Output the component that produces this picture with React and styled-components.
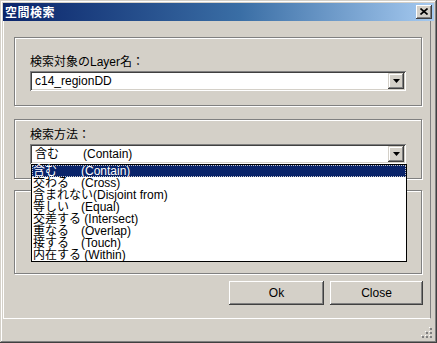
import React from 'react';
import styled, { createGlobalStyle } from 'styled-components';

const Global = createGlobalStyle`
  html, body { margin: 0; padding: 0; background: #d4d0c8; }
  body {
    font-family: "Liberation Sans", "Noto Sans CJK JP", sans-serif;
    font-size: 12px;
    color: #000;
  }
  * { box-sizing: border-box; }
`;

const Window = styled.div`
  width: 437px;
  height: 343px;
  padding: 3px;
  background: #d4d0c8;
  box-shadow: inset -1px -1px #404040, inset 1px 1px #d4d0c8,
    inset -2px -2px #808080, inset 2px 2px #ffffff;
  display: flex;
  flex-direction: column;
`;

const TitleBar = styled.div`
  height: 18px;
  flex: none;
  background: linear-gradient(to right, #0a246a 0%, #3a6ea5 55%, #a6caf0 100%);
  display: flex;
  align-items: center;
  justify-content: space-between;
  padding: 0 2px 0 2px;
`;

const Title = styled.span`
  color: #fff;
  font-family: "Noto Sans CJK JP", sans-serif;
  font-weight: 700;
  font-size: 12px;
  letter-spacing: 0.5px;
  line-height: 16px;
`;

const CloseBtn = styled.div`
  width: 16px;
  height: 14px;
  background: #d4d0c8;
  box-shadow: inset -1px -1px #404040, inset 1px 1px #ffffff,
    inset -2px -2px #808080;
  display: flex;
  align-items: center;
  justify-content: center;
  padding-bottom: 1px;
  padding-right: 1px;
`;

const Panel = styled.div`
  width: 428px;
  height: 298px;
  flex: none;
  border-left: 1px solid #ffffff;
  border-right: 1px solid #808080;
  border-bottom: 1px solid #ffffff;
  padding: 16px 8px 0 10px;
  display: flex;
  flex-direction: column;
`;

const Group = styled.div`
  position: relative;
  width: 408px;
  height: ${(p) => p.$h}px;
  margin-top: ${(p) => p.$mt || 0}px;
  border: 1px solid #808080;
  box-shadow: inset 1px 1px #ffffff, 1px 1px #ffffff;
  padding: ${(p) => p.$pt || 0}px 15px 0 15px;
  flex: none;
`;

const Label = styled.div`
  height: 12px;
  line-height: 12px;
  margin-bottom: 3px;
  white-space: pre;
`;

const ComboWrap = styled.div`
  position: relative;
  width: 376px;
`;

const Combo = styled.div`
  width: 376px;
  height: 20px;
  background: #ffffff;
  box-shadow: inset 1px 1px #808080, inset -1px -1px #ffffff,
    inset 2px 2px #404040, inset -2px -2px #d4d0c8;
  display: flex;
  align-items: center;
  justify-content: space-between;
  padding: 2px 2px 2px 5px;
`;

const ComboText = styled.span`
  white-space: pre;
  line-height: 12px;
`;

const DropBtn = styled.div`
  width: 16px;
  height: 16px;
  background: #d4d0c8;
  box-shadow: inset -1px -1px #404040, inset 1px 1px #d4d0c8,
    inset -2px -2px #808080, inset 2px 2px #ffffff;
  display: flex;
  align-items: center;
  justify-content: center;
`;

const List = styled.div`
  position: absolute;
  top: 100%;
  left: 1px;
  width: 376px;
  background: #ffffff;
  border: 1px solid #000000;
  z-index: 10;
`;

const Item = styled.div`
  height: 12px;
  line-height: 12px;
  padding-left: 1px;
  white-space: pre;
  background: ${(p) => (p.$sel ? '#0a246a' : '#ffffff')};
  color: ${(p) => (p.$sel ? '#ffffff' : '#000000')};
  outline: ${(p) => (p.$sel ? '1px dotted #c8c8c8' : 'none')};
  outline-offset: -1px;
`;

const ButtonRow = styled.div`
  display: flex;
  justify-content: flex-end;
  gap: 6px;
  margin-top: 7px;
  margin-right: -1px;
`;

const Button = styled.div`
  width: ${(p) => p.$w}px;
  height: 24px;
  background: #d4d0c8;
  box-shadow: inset -1px -1px #404040, inset 1px 1px #ffffff,
    inset -2px -2px #808080, inset 2px 2px #d4d0c8;
  display: flex;
  align-items: center;
  justify-content: center;
  line-height: 12px;
`;

const StatusBar = styled.div`
  flex: 1;
  display: flex;
  align-items: flex-end;
  justify-content: flex-end;
  padding: 0 1px 1px 0;
`;

const Arrow = () => (
  <svg width="7" height="4" viewBox="0 0 7 4">
    <path d="M0 0h7L3.5 4z" fill="#000" />
  </svg>
);

const XGlyph = () => (
  <svg width="8" height="7" viewBox="0 0 8 7">
    <path d="M0.5 0.5L7.5 6.5M7.5 0.5L0.5 6.5" stroke="#000" strokeWidth="1.6" />
  </svg>
);

const Grip = () => {
  const pts = [
    [9, 1],
    [5, 5], [9, 5],
    [1, 9], [5, 9], [9, 9],
  ];
  return (
    <svg width="12" height="12" viewBox="0 0 12 12">
      {pts.map(([x, y], i) => (
        <g key={i}>
          <rect x={x} y={y} width="2" height="2" fill="#808080" />
          <rect x={x - 1} y={y - 1} width="1" height="1" fill="#ffffff" />
        </g>
      ))}
    </svg>
  );
};

const items = [
  '含む　　(Contain)',
  '交わる　(Cross)',
  '含まれない(Disjoint from)',
  '等しい　(Equal)',
  '交差する (Intersect)',
  '重なる　(Overlap)',
  '接する　(Touch)',
  '内在する (Within)',
];

export default function App() {
  return (
    <>
      <Global />
      <Window>
        <TitleBar>
          <Title>空間検索</Title>
          <CloseBtn>
            <XGlyph />
          </CloseBtn>
        </TitleBar>
        <Panel>
          <Group $h={69} $pt={18}>
            <Label>検索対象のLayer名：</Label>
            <ComboWrap>
              <Combo>
                <ComboText>c14_regionDD</ComboText>
                <DropBtn>
                  <Arrow />
                </DropBtn>
              </Combo>
            </ComboWrap>
          </Group>
          <Group $h={60} $mt={13} $pt={9}>
            <Label>検索方法：</Label>
            <ComboWrap>
              <Combo>
                <ComboText>{items[0]}</ComboText>
                <DropBtn>
                  <Arrow />
                </DropBtn>
              </Combo>
              <List>
                {items.map((t, i) => (
                  <Item key={i} $sel={i === 0}>
                    {t}
                  </Item>
                ))}
              </List>
            </ComboWrap>
          </Group>
          <Group $h={84} $mt={11} $pt={18} />
          <ButtonRow>
            <Button $w={95}>Ok</Button>
            <Button $w={93}>Close</Button>
          </ButtonRow>
        </Panel>
        <StatusBar>
          <Grip />
        </StatusBar>
      </Window>
    </>
  );
}
